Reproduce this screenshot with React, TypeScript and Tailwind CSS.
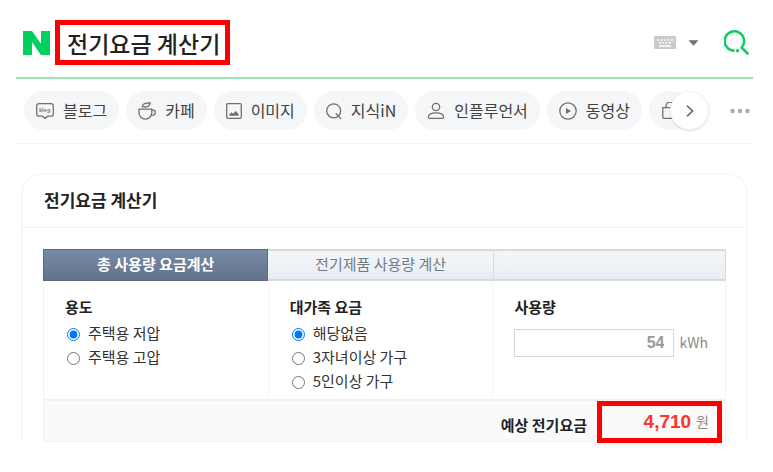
import type { ReactNode } from "react";

const stroke = {
  fill: "none",
  stroke: "#6f7072",
  strokeWidth: 1.3,
  strokeLinecap: "round" as const,
  strokeLinejoin: "round" as const,
};

function BlogIcon() {
  return (
    <svg width="18" height="18" viewBox="0 0 18 18" {...stroke} aria-hidden="true">
      <path d="M3 1.6h12a2.3 2.3 0 0 1 2.3 2.3v8a2.3 2.3 0 0 1-2.3 2.3h-3.6L9 16.4l-2.4-2.2H3A2.3 2.3 0 0 1 .7 11.900V3.900A2.300 2.300 0 0 1 3 1.600z" />
      <g strokeWidth="1" stroke="#8a8b8d">
        <path d="M4 6v3.600M7 6v3.600" />
        <circle cx="5" cy="8.500" r="0.900" />
        <circle cx="9.300" cy="8.500" r="1" />
        <circle cx="12.600" cy="8.400" r="1" />
        <path d="M13.700 7.500v2.600c0 .7-1 .8-1.900.6" />
      </g>
    </svg>
  );
}

function CafeIcon() {
  return (
    <svg width="18" height="18" viewBox="0 0 18 18" {...stroke} aria-hidden="true">
      <path d="M1 7.200h12.800v3.600a6.400 6.400 0 0 1-12.800 0z" />
      <path d="M13.800 8.200h1.500a2 2 0 0 1 2 2.100c0 1.900-1.700 3.200-4.100 3.200" />
      <path d="M4.300 4.700C4.600 1.800 7.200.7 12.300.8c-.2 3.300-3.400 4.900-8 3.900z" />
    </svg>
  );
}

function ImageIcon() {
  return (
    <svg width="16" height="18" viewBox="0 0 16 18" {...stroke} aria-hidden="true">
      <rect x="0.700" y="1.700" width="14.600" height="14.600" rx="1.200" />
      <path d="M3.500 13.700v-1.500l2-2 1.700 1.500 2.400-2.600 2.900 3v1.600z" fill="#6f7072" stroke="none" />
    </svg>
  );
}

function KinIcon() {
  return (
    <svg width="16" height="18" viewBox="0 0 16 18" {...stroke} aria-hidden="true">
      <circle cx="7.700" cy="8.800" r="7" />
      <path d="M10.200 11.800l4.700 4.800" />
    </svg>
  );
}

function PersonIcon() {
  return (
    <svg width="18" height="18" viewBox="0 0 18 18" {...stroke} aria-hidden="true">
      <circle cx="9" cy="5" r="3.700" />
      <path d="M1.400 15.200c0-2.800 3.200-4.400 7.600-4.400s7.600 1.600 7.600 4.400c0 .8-.4 1.200-1.200 1.200H2.600c-.8 0-1.200-.4-1.200-1.200z" />
    </svg>
  );
}

function PlayIcon() {
  return (
    <svg width="18" height="18" viewBox="0 0 18 18" {...stroke} aria-hidden="true">
      <circle cx="9" cy="9" r="8.200" />
      <path d="M7 5.900l5 3.100-5 3.100z" fill="#6f7072" stroke="none" />
    </svg>
  );
}

function ShoppingIcon() {
  return (
    <svg width="18" height="18" viewBox="0 0 18 18" {...stroke} aria-hidden="true">
      <path d="M1.800 5.600h14.400v1.200M1.800 5.600v9.400a1.400 1.400 0 0 0 1.400 1.400h12" />
      <path d="M5 5.600V4a4 4 0 0 1 8 0v1.600" />
    </svg>
  );
}

function Pill({ icon, children }: { icon: ReactNode; children?: ReactNode }) {
  return (
    <a
      href="#"
      className="flex h-[39px] shrink-0 items-center gap-[9px] whitespace-nowrap rounded-full bg-[#f5f6f8] px-3 text-base text-[#424242]"
    >
      {icon}
      {children && <span className="pb-0.5">{children}</span>}
    </a>
  );
}

function Radio({ name, label, checked }: { name: string; label: string; checked?: boolean }) {
  return (
    <label className="flex h-6 items-center gap-2 text-[15px] text-[#333]">
      <input type="radio" name={name} defaultChecked={checked} className="mt-px ml-0.5 size-[13px]" />
      <span className="pb-0.5">{label}</span>
    </label>
  );
}

export default function App() {
  return (
    <div className="bg-white pr-5 pb-7 pl-4 font-['Noto_Sans_CJK_KR',sans-serif] text-[#222]">
      <header className="flex h-[79px] items-center border-b-2 border-[#9be6b9] pt-2 pr-1 pl-[7px]">
        <a href="#" aria-label="NAVER">
          <svg width="27" height="24" viewBox="0 0 27 24" aria-hidden="true">
            <path d="M0 0h9l9 12.700V0h9v24h-9L9 11.300V24H0z" fill="#03cf5d" />
          </svg>
        </a>
        <input
          type="text"
          aria-label="검색어"
          defaultValue="전기요금 계산기"
          className="ml-[5px] h-[45px] w-[175px] border-5 border-[#ff0000] pl-[7px] text-[23px] font-medium outline-none"
        />
        <button type="button" aria-label="입력기" className="ml-auto">
          <svg width="22" height="13" viewBox="0 0 22 13" aria-hidden="true">
            <rect width="22" height="13" rx="1" fill="#c9cacc" />
            <path
              d="M3 4h2M6.500 4h2M10 4h2M13.500 4h2M17 4h2M5 6.800h2M8.300 6.800h2M11.600 6.800h2M15 6.800h2M5 10h12"
              stroke="#fff"
              strokeWidth="1.600"
            />
          </svg>
        </button>
        <button type="button" aria-label="자동완성 펼치기" className="ml-3">
          <svg width="11" height="6" viewBox="0 0 11 6" aria-hidden="true">
            <path d="M.5.300h10l-5 5.500z" fill="#707173" />
          </svg>
        </button>
        <button type="submit" aria-label="검색" className="ml-[25px]">
          <svg width="25" height="25" viewBox="0 0 25 25" fill="none" stroke="#10cb60" strokeWidth="2.500" strokeLinecap="round" aria-hidden="true">
            <path d="M9.700 20.700A9.700 9.700 0 1 1 17.600 17.500l6 6" strokeLinejoin="round" />
            <circle cx="13.600" cy="20.800" r="1.700" fill="#10cb60" stroke="none" />
          </svg>
        </button>
      </header>

      <nav className="flex items-center justify-between border-b border-[#f3f4f5] pt-3 pr-[3px] pb-[13px] pl-2">
        <div className="relative min-w-0">
          <div className="flex gap-[7px] overflow-hidden rounded-r-full pr-[18px]">
            <Pill icon={<BlogIcon />}>블로그</Pill>
            <Pill icon={<CafeIcon />}>카페</Pill>
            <Pill icon={<ImageIcon />}>이미지</Pill>
            <Pill icon={<KinIcon />}>지식iN</Pill>
            <Pill icon={<PersonIcon />}>인플루언서</Pill>
            <Pill icon={<PlayIcon />}>동영상</Pill>
            <Pill icon={<ShoppingIcon />} />
          </div>
          <button
            type="button"
            aria-label="다음"
            className="absolute top-0 right-0 flex size-[39px] items-center justify-center rounded-full border border-[#f1f2f3] bg-white shadow-sm"
          >
            <svg width="8" height="12" viewBox="0 0 8 12" fill="none" stroke="#5c5d60" strokeWidth="1.500" aria-hidden="true">
              <path d="M1 .8L6.600 6 1 11.200" />
            </svg>
          </button>
        </div>
        <button type="button" aria-label="더보기" className="shrink-0">
          <svg width="20" height="6" viewBox="0 0 20 6" fill="#a9aaac" aria-hidden="true">
            <circle cx="2.500" cy="3" r="2.200" />
            <circle cx="10" cy="3" r="2.200" />
            <circle cx="17.500" cy="3" r="2.200" />
          </svg>
        </button>
      </nav>

      <main className="mt-[29px] mr-[5px] ml-[5px] rounded-t-[20px] border-2 border-b-0 border-[#f7f7f8]">
        <h1 className="flex h-[53px] items-center border-b border-[#f4f4f5] px-[21px] pb-0.5 text-[17px] font-bold">
          전기요금 계산기
        </h1>
        <form className="px-5 pt-[21px]">
          <div className="grid h-8 grid-cols-[33fr_33fr_34fr] text-[15px]">
            <button type="button" className="border border-[#5b6c84] bg-linear-to-b from-[#778ba5] to-[#62738b] pb-0.5 font-bold text-white">
              총 사용량 요금계산
            </button>
            <button
              type="button"
              className="border-t-2 border-r border-b-2 border-[#d5dbdf] bg-linear-to-b from-[#f4f7f9] to-[#e9edf2] pb-0.5 text-[#727b84]"
            >
              전기제품 사용량 계산
            </button>
            <div className="border-t-2 border-r border-b-2 border-[#d5dbdf] bg-linear-to-b from-[#f4f7f9] to-[#e9edf2]" />
          </div>

          <div className="grid grid-cols-[33fr_33fr_34fr] divide-x divide-[#f4f4f5] border-x border-[#f2f2f3]">
            <fieldset className="px-[21px] pt-[14px] pb-[5px]">
              <legend className="float-left mb-[3px] w-full text-[15px] leading-6 font-bold">용도</legend>
              <div className="clear-both">
                <Radio name="usage" label="주택용 저압" checked />
                <Radio name="usage" label="주택용 고압" />
              </div>
            </fieldset>
            <fieldset className="px-[21px] pt-[14px] pb-[5px]">
              <legend className="float-left mb-[3px] w-full text-[15px] leading-6 font-bold">대가족 요금</legend>
              <div className="clear-both">
                <Radio name="family" label="해당없음" checked />
                <Radio name="family" label="3자녀이상 가구" />
                <Radio name="family" label="5인이상 가구" />
              </div>
            </fieldset>
            <div className="pt-[14px] pl-[21px]">
              <label htmlFor="kwh" className="block text-[15px] leading-6 font-bold">
                사용량
              </label>
              <div className="mt-[10px] flex items-center gap-[5px] text-[#8b8b8b]">
                <input
                  id="kwh"
                  type="text"
                  defaultValue="54"
                  className="h-7 w-40 border border-[#d3d9dc] bg-white pr-[9px] text-right font-['Liberation_Sans',sans-serif] text-base font-bold text-[#999] outline-none"
                />
                <span className="pb-0.5 text-sm">kWh</span>
              </div>
            </div>
          </div>

          <div className="flex h-[43px] items-start justify-end border border-t-2 border-[#f2f2f3] bg-[#fafafb] pr-[3px]">
            <span className="pt-3 pr-[10px] text-[15px] leading-6 font-bold">예상 전기요금</span>
            <output className="flex h-[42px] w-[125px] items-center justify-end gap-[5px] border-5 border-[#ff0000] pr-2 text-sm text-[#8b8b8b]">
              <strong className="font-['Liberation_Sans',sans-serif] text-[19px] text-[#ff3329]">4,710</strong>
              <span className="pb-0.5">원</span>
            </output>
          </div>
        </form>
      </main>
    </div>
  );
}
